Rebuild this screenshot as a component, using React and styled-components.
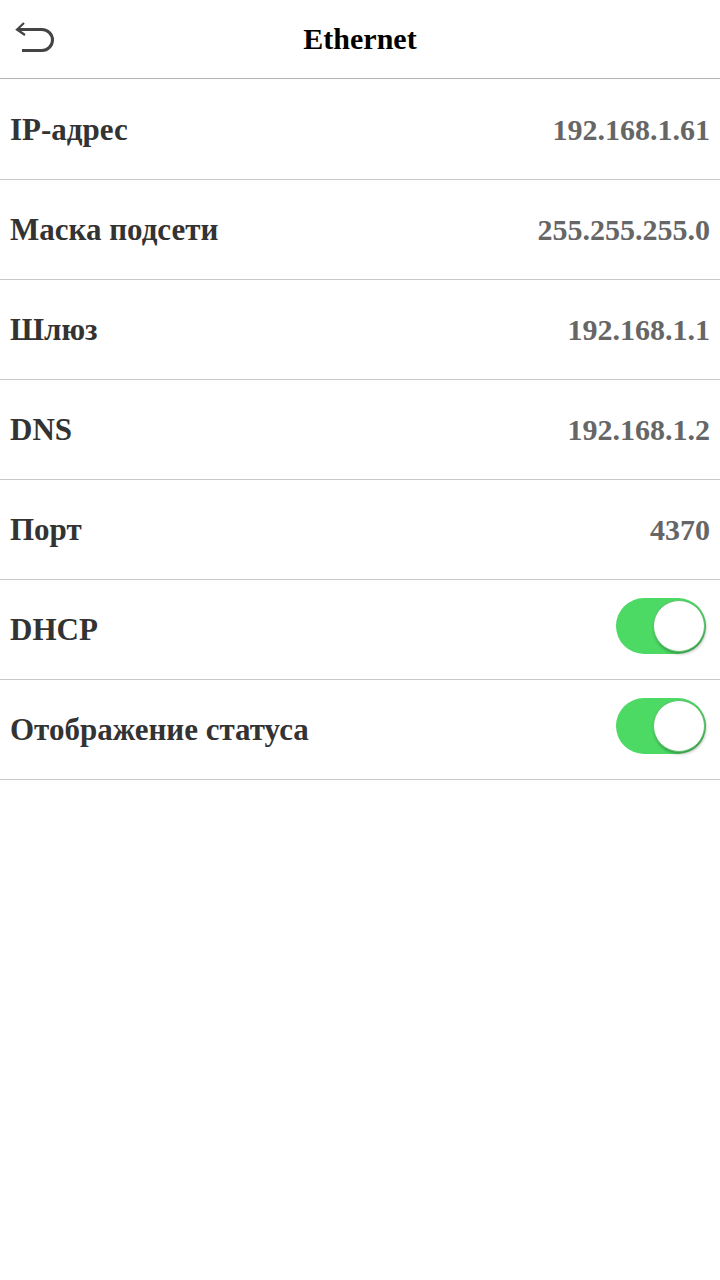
import styled, { createGlobalStyle } from 'styled-components'

const GlobalStyle = createGlobalStyle`
  html, body {
    margin: 0;
    padding: 0;
    background: #fff;
  }
  body {
    font-family: "Liberation Serif", "Times New Roman", serif;
  }
`

const rows = [
  { label: 'IP-адрес', value: '192.168.1.61' },
  { label: 'Маска подсети', value: '255.255.255.0' },
  { label: 'Шлюз', value: '192.168.1.1' },
  { label: 'DNS', value: '192.168.1.2' },
  { label: 'Порт', value: '4370' },
  { label: 'DHCP', toggle: true },
  { label: 'Отображение статуса', toggle: true },
]

// back arrow: U-turn with a small arrowhead at the top-left
const BackIcon = () => (
  <svg width="40" height="36" viewBox="0 0 40 36" fill="none">
    <path
      d="M3.5 9.5 H28 A10.5 10.5 0 0 1 28 30.5 H8"
      stroke="#444"
      strokeWidth="3"
    />
    <path
      d="M10 3 L3 9.5 L11 15"
      stroke="#444"
      strokeWidth="2.2"
      strokeLinejoin="miter"
    />
  </svg>
)

const App = () => {
  return (
    <Page>
      <GlobalStyle />
      <Header>
        <BackButton>
          <BackIcon />
        </BackButton>
        <Title>Ethernet</Title>
      </Header>
      <List>
        {rows.map((r) => (
          <Row key={r.label}>
            <Label>{r.label}</Label>
            {r.toggle ? (
              <Toggle $on>
                <Knob />
              </Toggle>
            ) : (
              <Value>{r.value}</Value>
            )}
          </Row>
        ))}
      </List>
    </Page>
  )
}

const Page = styled.div`
  width: 720px;
  min-height: 1280px;
  background: #fff;
`

const Header = styled.header`
  height: 78px;
  display: flex;
  align-items: center;
  justify-content: center;
  position: relative;
  border-bottom: 1px solid #b4b4b4;
`

const BackButton = styled.div`
  position: absolute;
  left: 14px;
  top: 20px;
  width: 40px;
  height: 36px;
`

const Title = styled.h1`
  margin: 0;
  font-size: 30px;
  font-weight: bold;
  color: #000;
`

const List = styled.div`
  display: flex;
  flex-direction: column;
  padding-top: 1px;
`

const Row = styled.div`
  height: 99px;
  display: flex;
  align-items: center;
  justify-content: space-between;
  padding: 0 10px;
  border-bottom: 1px solid #c8c8c8;
`

const Label = styled.span`
  font-size: 31px;
  font-weight: bold;
  color: #333;
`

const Value = styled.span`
  font-size: 30px;
  font-weight: bold;
  color: #666;
`

const Toggle = styled.div`
  width: 90px;
  height: 56px;
  border-radius: 28px;
  background: ${(p) => (p.$on ? '#4cd964' : '#e5e5e5')};
  display: flex;
  align-items: center;
  justify-content: ${(p) => (p.$on ? 'flex-end' : 'flex-start')};
  padding: 0 1px;
  box-sizing: border-box;
  margin: 0 4px 8px 0;
`

const Knob = styled.div`
  width: 52px;
  height: 52px;
  border-radius: 50%;
  background: #fff;
  border: 1px solid #5ec46e;
  box-sizing: border-box;
  box-shadow: 1px 2px 3px rgba(0, 0, 0, 0.3);
`

export default App
